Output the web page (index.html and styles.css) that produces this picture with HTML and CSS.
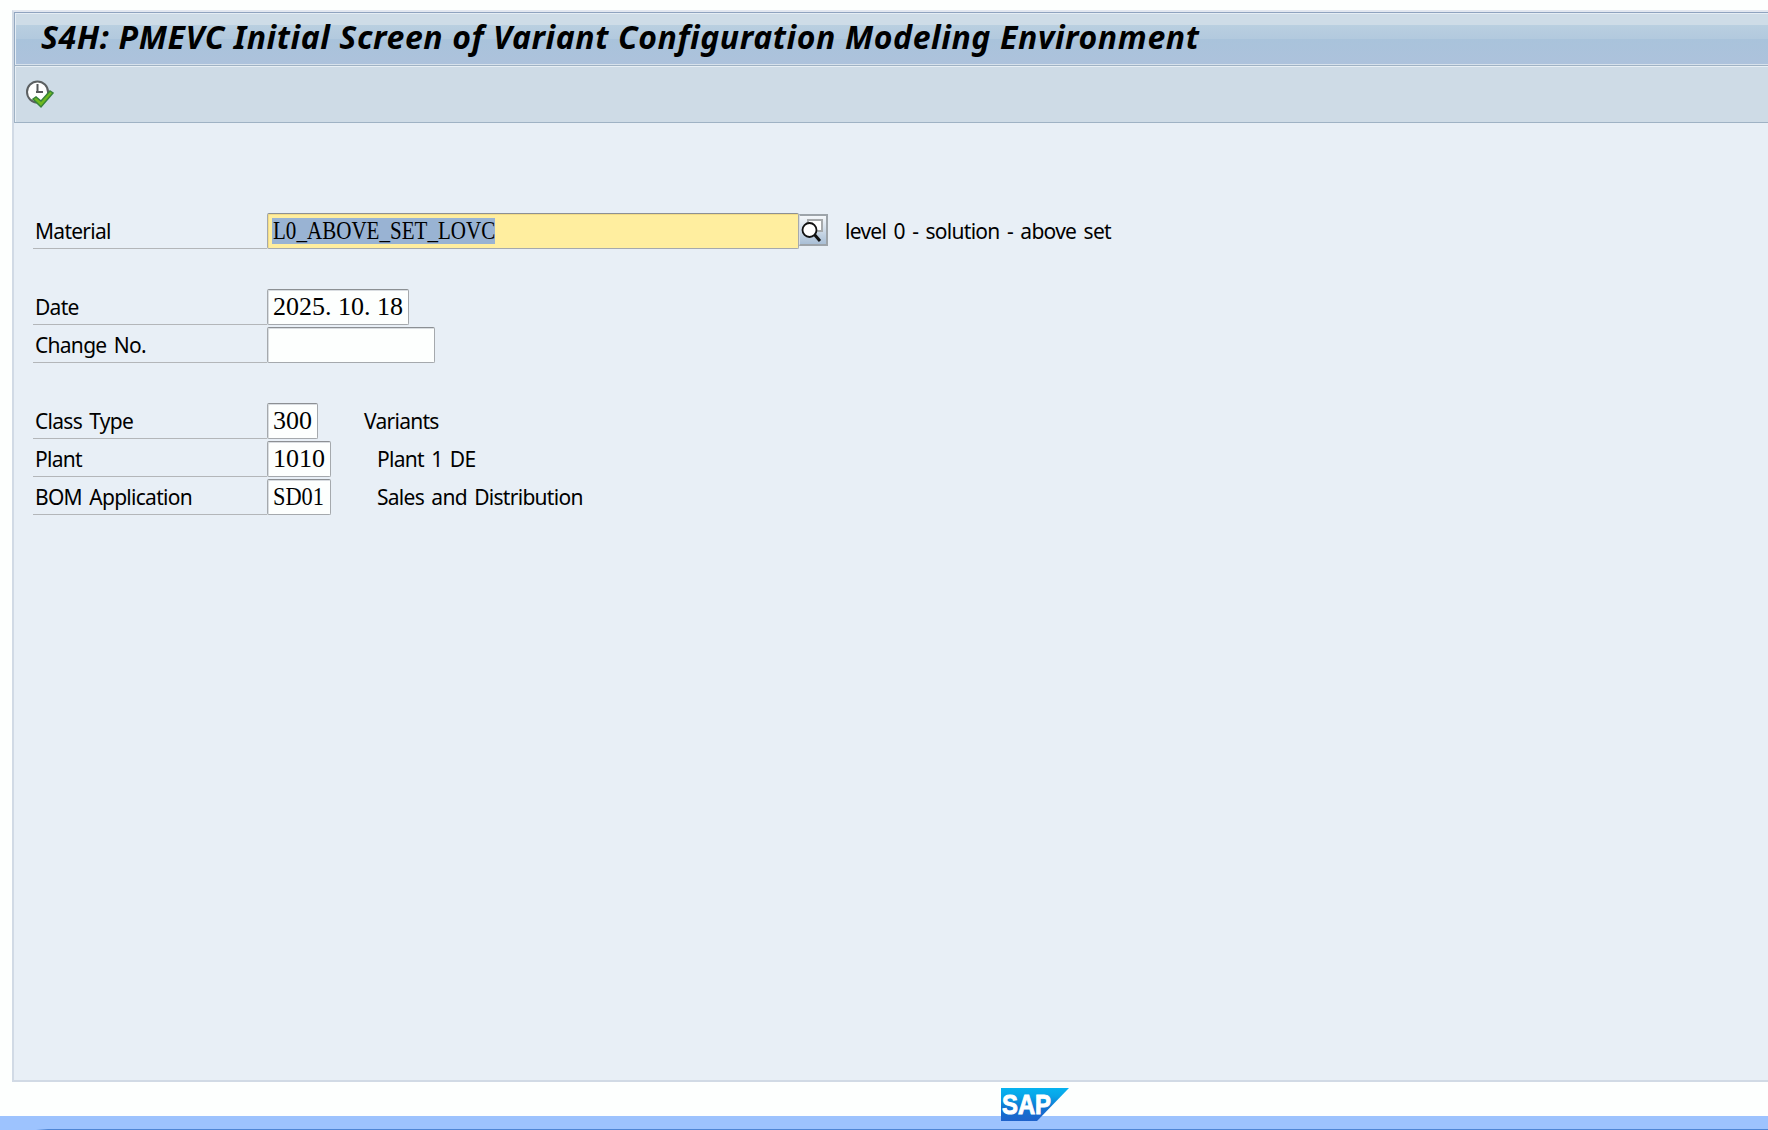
FILE: index.html
```html
<!DOCTYPE html>
<html lang="en">

<head>
    <meta charset="UTF-8">
    <title>PMEVC Initial Screen</title>
    <link rel="stylesheet" href="styles.css">
</head>

<body>
    <div class="window">
        <h1 class="title-bar"><span class="title">S4H: PMEVC Initial Screen of Variant Configuration Modeling Environment</span></h1>

        <div class="toolbar">
            <svg class="execute-icon" width="28" height="29" viewBox="0 0 28 29">
                <circle cx="11.500" cy="12" r="10.500" fill="#fff" stroke="#5c6062" stroke-width="2" stroke-dasharray="54 12" stroke-dashoffset="-14" />
                <path d="M11.500 4v8.500M10 12h7" fill="none" stroke="#55585a" stroke-width="2" />
                <path d="M7 19l3-2 5 4 9-10 3 2-12 14z" fill="#6fb91f" stroke="#37823a" stroke-width="1.500" />
            </svg>
        </div>

        <form class="selection">
            <div class="row">
                <label class="label">Material</label>
                <div class="field material active"><span class="selected"><span class="value">L0_ABOVE_SET_LOVC</span></span></div>
                <button type="button" class="search-help">
                    <svg width="26" height="28" viewBox="0 0 26 28">
                        <path d="M9 4h14v11H9z" fill="#fff" stroke="#a6a9ab" stroke-width="2" />
                        <path d="M15 18l6 7" stroke="#111" stroke-width="3" />
                        <circle cx="10.500" cy="14" r="7" fill="#fff" stroke="#111" stroke-width="1.800" />
                    </svg>
                </button>
                <span class="text material-text">level 0 - solution - above set</span>
            </div>

            <div class="row spaced">
                <label class="label">Date</label>
                <div class="field date">2025<span class="dot">.</span>10<span class="dot">.</span>18</div>
            </div>
            <div class="row">
                <label class="label">Change No.</label>
                <div class="field change-no"></div>
            </div>

            <div class="row spaced">
                <label class="label">Class Type</label>
                <div class="field class-type">300</div>
                <span class="text">Variants</span>
            </div>
            <div class="row">
                <label class="label">Plant</label>
                <div class="field key">1010</div>
                <span class="text">Plant 1 DE</span>
            </div>
            <div class="row">
                <label class="label">BOM Application</label>
                <div class="field key"><span class="value short">SD01</span></div>
                <span class="text">Sales and Distribution</span>
            </div>
        </form>
    </div>

    <div class="footer">
        <svg class="logo" width="68" height="33" viewBox="0 0 68 33">
            <defs>
                <linearGradient id="sap" x1="0" y1="0" x2="0" y2="1">
                    <stop offset="0" stop-color="#06b3f0" />
                    <stop offset="0.250" stop-color="#08a5e8" />
                    <stop offset="0.600" stop-color="#1173d0" />
                    <stop offset="1" stop-color="#1e62cb" />
                </linearGradient>
            </defs>
            <path d="M0 0h68L36 33H0z" fill="url(#sap)" />
            <text class="logo-text" x="1" y="26" textLength="49" lengthAdjust="spacingAndGlyphs">SAP</text>
        </svg>
    </div>
    <div class="taskbar"></div>
</body>

</html>
```
FILE: styles.css
```css
* {
    box-sizing: border-box;
}

body {
    margin: 0;
    height: 1130px;
    padding-top: 10px;
    display: flex;
    flex-direction: column;
    overflow: hidden;
    background-color: #fdfffe;
    color: #000;
    font-family: "Noto Sans", sans-serif;
}

.window {
    height: 1072px;
    margin-left: 12px;
    border: 2px solid #d1dae5;
    border-top-color: #e2e7f0;
    border-right: 0;
    background-color: #e8eff6;
}

.title-bar {
    height: 53px;
    margin: 0;
    padding-left: 26px;
    border-top: 1px solid #8fa3bf;
    border-left: 1px solid #94a9c1;
    box-shadow: inset 1px 1px 0 #e5edf4, inset 0 -1px 0 #d8e2ec;
    background: linear-gradient(#cedce7 0, #cedce7 12px, #b9cfe0 12px, #b2c9de 26px, #a9c3db 26px, #adc2dc 100%);
}

.title {
    display: block;
    font-size: 32px;
    font-weight: bold;
    font-style: italic;
    letter-spacing: 0.61px;
    line-height: 48px;
    white-space: nowrap;
}

.toolbar {
    height: 58px;
    padding: 14px 0 0 11px;
    border: 1px solid #9fb2c4;
    border-right: 0;
    box-shadow: inset 1px 1px 0 #e8eff5;
    background-color: #cedbe6;
}

.execute-icon {
    display: block;
}

.selection {
    padding: 90px 0 0 19px;
}

.row {
    display: flex;
    height: 36px;
    margin-bottom: 2px;
    white-space: nowrap;
}

.row.spaced {
    margin-top: 40px;
}

.label,
.text {
    font-size: 21px;
    letter-spacing: -0.72px;
    word-spacing: 2.6px;
    line-height: 36px;
}

.label {
    width: 234px;
    padding-left: 2px;
    border-bottom: 1px solid #b3b6b9;
}

.field {
    height: 36px;
    padding-left: 5px;
    border: 1px solid #a5a9ad;
    border-top-color: #8c9094;
    border-radius: 2px;
    box-shadow: inset 1px 1px 0 #d9dde1;
    background-color: #fdfffe;
    font-family: "Liberation Serif", serif;
    font-size: 26px;
    line-height: 34px;
}

.field.active {
    padding-left: 4px;
    padding-top: 4px;
    box-shadow: inset 1px 1px 0 #f3dc87;
    background-color: #ffee9f;
}

.material {
    width: 532px;
}

.date {
    width: 142px;
}

.change-no {
    width: 168px;
}

.class-type {
    width: 51px;
}

.key {
    width: 64px;
}

.dot {
    letter-spacing: 6.5px;
}

.selected {
    display: block;
    width: 223px;
    height: 26px;
    padding-left: 1px;
    background-color: #99b3d3;
    line-height: 26px;
}

/* squeezes the letters to the narrow field pitch */
.value {
    display: inline-block;
    transform: scaleX(0.81);
    transform-origin: left;
}

.value.short {
    transform: scaleX(0.86);
}

.search-help {
    width: 29px;
    height: 32px;
    margin-top: 1px;
    padding: 0;
    border: 2px solid #9da4aa;
    border-left: 1px solid #d7dde3;
    background: linear-gradient(#f5f8fb, #a9bfd6);
}

.search-help svg {
    display: block;
    margin-left: -1px;
}

.text {
    margin-left: 46px;
}

.material-text {
    margin-left: 17px;
}

.footer {
    height: 34px;
    padding: 6px 0 0 1001px;
}

.logo {
    display: block;
    position: relative;
    z-index: 1;
}

.logo-text {
    fill: #fff;
    stroke: #fff;
    stroke-width: 1px;
    font-family: "Liberation Sans", sans-serif;
    font-size: 28px;
    font-weight: bold;
}

.taskbar {
    height: 14px;
    background: linear-gradient(90deg, #9dc3fe 36px, #4f86d5 48px) bottom / 100% 1px no-repeat #9dc3fe;
}
```
